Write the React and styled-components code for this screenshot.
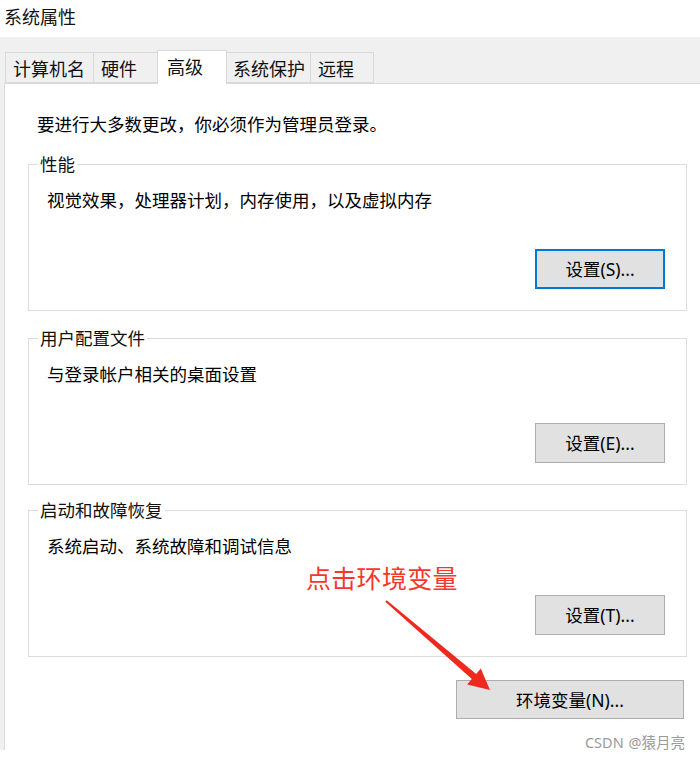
import React from "react";
import styled, { createGlobalStyle } from "styled-components";

const Global = createGlobalStyle`
  html, body { margin: 0; padding: 0; background: #ffffff; }
  body {
    font-family: "Noto Sans", "Noto Sans CJK SC", sans-serif;
    color: #000000;
  }
  * { box-sizing: border-box; }
`;

const Root = styled.div`
  position: relative;
  width: 700px;
  height: 759px;
  overflow: hidden;
  background: #ffffff;
`;

const TitleBar = styled.div`
  height: 37px;
  display: flex;
  align-items: center;
  padding-left: 4px;
  padding-bottom: 6px;
  font-size: 18px;
  line-height: 20px;
  font-family: "Noto Sans CJK SC", sans-serif;
  color: #111111;
`;

const WindowBody = styled.div`
  height: 713px;
  background: #f0f0f0;
  padding: 13px 0 0 4px;
  display: flex;
  flex-direction: column;
`;

const TabStrip = styled.div`
  display: flex;
  align-items: flex-end;
  height: 33px;
  margin-left: 1px;
  position: relative;
  z-index: 1;
`;

const Tab = styled.div`
  width: ${(p) => p.$w}px;
  height: ${(p) => (p.$active ? 34 : 31)}px;
  margin-bottom: ${(p) => (p.$active ? -1 : 0)}px;
  margin-left: ${(p) => (p.$first ? 0 : -1)}px;
  padding-left: ${(p) => p.$pad}px;
  display: flex;
  align-items: center;
  padding-bottom: ${(p) => (p.$active ? 3 : 0)}px;
  background: ${(p) => (p.$active ? "#ffffff" : "#f0f0f0")};
  border: 1px solid #d9d9d9;
  border-bottom: ${(p) => (p.$active ? "none" : "1px solid #d9d9d9")};
  font-size: 18px;
  line-height: 20px;
  font-family: "Noto Sans CJK SC", sans-serif;
  color: #111111;
  position: relative;
  z-index: ${(p) => (p.$active ? 2 : 1)};
`;

const Panel = styled.div`
  flex: 1;
  background: #ffffff;
  border-top: 1px solid #d9d9d9;
  border-left: 1px solid #d9d9d9;
  padding: 30px 13px 0 23px;
  display: flex;
  flex-direction: column;
`;

const Intro = styled.div`
  font-size: 17.5px;
  line-height: 20px;
  font-family: "Noto Sans CJK SC", sans-serif;
  padding-left: 9px;
  margin-bottom: 20px;
`;

const Group = styled.fieldset`
  margin: 0 0 ${(p) => p.$gap}px 0;
  padding: 0;
  border: 1px solid #dcdcdc;
  width: 659px;
  min-width: 0;
`;

const Legend = styled.legend`
  margin-left: 9px;
  padding: 0 2px;
  font-size: 17.5px;
  line-height: 20px;
  font-family: "Noto Sans CJK SC", sans-serif;
  color: #111111;
`;

const GroupBody = styled.div`
  padding: 16px 21px 21px 18px;
  display: flex;
  flex-direction: column;
`;

const Desc = styled.div`
  font-size: 17.5px;
  line-height: 20px;
  font-family: "Noto Sans CJK SC", sans-serif;
  height: 20px;
  margin-bottom: 39px;
`;

const Button = styled.button`
  align-self: flex-end;
  width: ${(p) => p.$w}px;
  height: ${(p) => p.$h}px;
  margin-right: ${(p) => p.$mr || 0}px;
  background: #e1e1e1;
  border: ${(p) => (p.$focus ? "2px solid #0078d7" : "1px solid #adadad")};
  border-radius: 0;
  padding: 0;
  font-size: 17.5px;
  line-height: 20px;
  font-family: "Noto Sans", "Noto Sans CJK SC", sans-serif;
  color: #000000;
  display: flex;
  align-items: center;
  justify-content: center;
`;

const Annotation = styled.div`
  position: absolute;
  left: 306px;
  top: 562px;
  font-size: 25px;
  line-height: 30px;
  font-family: "Noto Sans CJK SC", sans-serif;
  color: #f5372c;
  letter-spacing: 0.3px;
`;

const ArrowLayer = styled.svg`
  position: absolute;
  left: 0;
  top: 0;
  pointer-events: none;
`;

const Watermark = styled.div`
  position: absolute;
  right: 15px;
  top: 733px;
  font-size: 14.5px;
  line-height: 18px;
  font-family: "Noto Sans", "Noto Sans CJK SC", sans-serif;
  color: #9a9a9a;
  word-spacing: 1px;
`;

const tabs = [
  { label: "计算机名", w: 89, pad: 7 },
  { label: "硬件", w: 65, pad: 7 },
  { label: "高级", w: 70, pad: 9, active: true },
  { label: "系统保护", w: 85, pad: 6 },
  { label: "远程", w: 64, pad: 7 },
];

const groups = [
  { title: "性能", desc: "视觉效果，处理器计划，内存使用，以及虚拟内存", btn: "设置(S)...", focus: true, gap: 17 },
  { title: "用户配置文件", desc: "与登录帐户相关的桌面设置", btn: "设置(E)...", gap: 15 },
  { title: "启动和故障恢复", desc: "系统启动、系统故障和调试信息", btn: "设置(T)...", gap: 23 },
];

export default function App() {
  return (
    <Root>
      <Global />
      <TitleBar>系统属性</TitleBar>
      <WindowBody>
        <TabStrip>
          {tabs.map((t, i) => (
            <Tab key={t.label} $w={t.w} $pad={t.pad} $active={t.active} $first={i === 0}>
              {t.label}
            </Tab>
          ))}
        </TabStrip>
        <Panel>
          <Intro>要进行大多数更改，你必须作为管理员登录。</Intro>
          {groups.map((g) => (
            <Group key={g.title} $gap={g.gap}>
              <Legend>{g.title}</Legend>
              <GroupBody>
                <Desc>{g.desc}</Desc>
                <Button $w={130} $h={40} $focus={g.focus}>{g.btn}</Button>
              </GroupBody>
            </Group>
          ))}
          <Button $w={228} $h={39} $mr={3}>环境变量(N)...</Button>
        </Panel>
      </WindowBody>
      <Annotation>点击环境变量</Annotation>
      <ArrowLayer width="700" height="759" viewBox="0 0 700 759">
        <polygon
          fill="#ee2a1f"
          points="386.7,600.2 476.2,673.9 480.8,668.4 490,690 467.2,684.4 471.8,678.9 385.3,601.8"
        />
      </ArrowLayer>
      <Watermark>CSDN @猿月亮</Watermark>
    </Root>
  );
}
